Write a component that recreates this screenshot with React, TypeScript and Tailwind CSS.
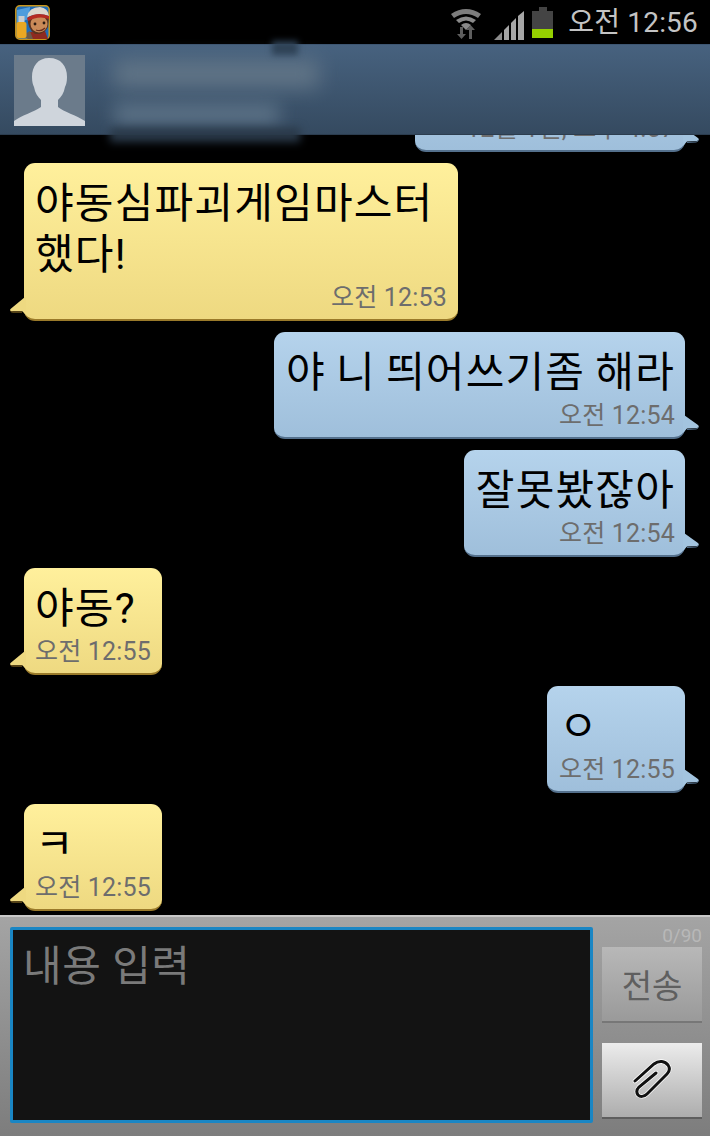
const KR = "font-['Roboto','Noto_Sans_CJK_KR',sans-serif]";

function Tail({ side, color }: { side: "left" | "right"; color: string }) {
  return side === "left" ? (
    <svg className="absolute left-[-15px] bottom-[2px]" width="17" height="20" viewBox="0 0 17 20">
      <path d="M16 0 L1.5 12 Q0 14 3 14 L13 14 L17 18 L17 0 Z" fill={color} />
      <path d="M1.5 14 Q2 15 4 15 L13 15" stroke="#a8842e" strokeWidth="1" fill="none" />
    </svg>
  ) : (
    <svg className="absolute right-[-15px] bottom-[2px]" width="17" height="20" viewBox="0 0 17 20">
      <path d="M1 0 L15 10 Q17 12 14 13 L4 13.5 L0 18 L0 0 Z" fill={color} />
      <path d="M15.5 12.5 Q15 13.6 13 14 L4 14.5" stroke="#54708c" strokeWidth="1" fill="none" />
    </svg>
  );
}

function Bubble({ side, lines, time, width }: { side: "left" | "right"; lines: string[]; time: string; width?: string }) {
  const left = side === "left";
  return (
    <div className={`flex shrink-0 ${left ? "justify-start pl-[24px]" : "justify-end pr-[25px]"}`}>
      <div
        className={`relative rounded-[11px] pt-[15px] pb-[6px] ${width ?? ""} ${
          left
            ? "pl-[11px] pr-[11px] bg-gradient-to-b from-[#fff09c] to-[#eed981] border-b-2 border-[#9a7a2a]"
            : "pl-[12px] pr-[10px] bg-gradient-to-b from-[#b5d3ec] to-[#9fbfdb] border-b-2 border-[#54708c]"
        }`}
      >
        <div className="text-[42px] leading-[51px] text-black whitespace-nowrap tracking-[1.2px] [word-spacing:-1.5px]">
          {lines.map((l) => (
            <div key={l}>{l}</div>
          ))}
        </div>
        <div className="text-right text-[25px] leading-[30px] text-[#6d6d6d] whitespace-nowrap mt-[3px] tracking-[0.2px]">{time}</div>
        <Tail side={side} color={left ? "#eed981" : "#a3c4df"} />
      </div>
    </div>
  );
}

function GameIcon() {
  return (
    <svg width="35" height="35" viewBox="0 0 35 35">
      <rect x="0.8" y="0.8" width="33.4" height="33.4" rx="4" fill="#1d6cb8" stroke="#c9961c" strokeWidth="1.5" />
      <path d="M2 5 L15 2 L14 14 L2 18 Z" fill="#4f9ddc" />
      <path d="M15 34 L14 27 L30 26 L33 34 Z" fill="#8e2a20" />
      <path d="M13 34 L8 30 L15 26 L18 34 Z" fill="#6b5a4a" />
      <path d="M13 12 Q12 24 20 29 Q29 30 33 22 L34 11 Z" fill="#5a3320" />
      <circle cx="24" cy="19" r="8.5" fill="#c98a58" />
      <path d="M12 12 Q14 2 25 2 Q33 3 34 11 Q24 7 12 12 Z" fill="#dcd6cc" />
      <path d="M12 13 Q22 6 34 11 L34 14 Q24 10 13 16 Z" fill="#b52a22" />
      <circle cx="20" cy="19" r="1.4" fill="#2a1a12" />
      <circle cx="29" cy="18" r="1.4" fill="#2a1a12" />
      <path d="M21 25 Q26 27 30 23" stroke="#6c2c1c" strokeWidth="1.2" fill="none" />
      <rect x="1.5" y="17" width="10" height="16" rx="2" fill="#e9a823" />
      <rect x="3.5" y="11" width="6" height="6" fill="#c9cdd0" />
    </svg>
  );
}

function StatusBar() {
  return (
    <div className="h-[44px] bg-black flex items-center pl-[15px] pr-[12px]">
      <GameIcon />
      <div className="flex-1" />
      <svg width="30" height="32" viewBox="0 0 30 32" className="mr-[13px] mt-[2px]">
        <path d="M0 7 Q15 -3 30 7 L27 11 Q15 3 3 11 Z" fill="#7d7d7d" />
        <path d="M5 13 Q15 6 25 13 L22 16 Q15 11 8 16 Z" fill="#8a8a8a" />
        <path d="M10 18 Q15 14 20 18 L15 23 Z" fill="#8a8a8a" />
        <path d="M9 20 h3 v7 h3 l-4.5 5 l-4.5 -5 h3 Z" fill="#5e5e5e" />
        <path d="M18 32 h3 v-9 h3 l-4.5 -5 l-4.5 5 h3 Z" fill="#5e5e5e" />
      </svg>
      <svg width="30" height="29" viewBox="0 0 30 29" className="mr-[8px] mt-[7px]">
        <path d="M0 29 L8 21 V29 Z" fill="#8c8c8c" />
        <path d="M10 19 L15 14 V29 H10 Z" fill="#a6a6a6" />
        <path d="M17 12 L22 7 V29 H17 Z" fill="#a6a6a6" />
        <path d="M24 5 L30 0 V29 H24 Z" fill="#a6a6a6" />
      </svg>
      <div className="mr-[15px] flex flex-col items-center">
        <div className="w-[8px] h-[4px] bg-[#444]" />
        <div className="w-[21px] h-[27px] flex flex-col bg-[#444]">
          <div className="flex-1" />
          <div className="h-[9px] bg-[#95d000]" />
        </div>
      </div>
      <span className="text-[28px] leading-none text-[#c4c4c4] whitespace-nowrap tracking-[0.2px] mt-[2px]">오전 12:56</span>
    </div>
  );
}

function Header() {
  return (
    <div className="relative z-10 h-[91px] shrink-0 bg-gradient-to-b from-[#47627f] to-[#354a60] border-t border-[#3d5672] border-b border-b-[#2c3d4f] flex items-center pl-[14px] pt-[2px]">
      <svg width="71" height="71" viewBox="0 0 71 71" className="shrink-0">
        <rect width="71" height="71" fill="#6b7b8b" />
        <path
          d="M35 3 C24 3 18 11 18 22 C18 27 19 30 20 32 C21 38 24 42 27 45 L27 52 C20 57 8 60 0 66 L0 71 L71 71 L71 66 C62 60 50 57 44 52 L44 45 C47 42 50 38 51 32 C52 30 53 27 53 22 C53 11 47 3 35 3 Z"
          fill="#cfd5dc"
        />
      </svg>
      <div className="absolute left-[114px] top-[15px] w-[205px] h-[28px] bg-[#6b7d8c] blur-[10px] opacity-75" />
      <div className="absolute left-[114px] top-[58px] w-[165px] h-[22px] bg-[#647a8e] blur-[9px] opacity-80" />
      <div className="absolute left-[110px] top-[83px] w-[190px] h-[14px] bg-[#2a3949] blur-[4px]" />
      <div className="absolute left-[272px] top-[-4px] w-[26px] h-[14px] bg-[#2f4256] blur-[3px]" />
    </div>
  );
}

const CLIP = "M4 22 L23 5 C28 1 34 2 37 6 C39 9 39 12 36 15 L16 35 C13 38 9 38 7 36 C5 33 6 30 8 28 L25 14";

function Composer() {
  return (
    <div className="h-[221px] shrink-0 bg-gradient-to-b from-[#a4a4a4] to-[#7d7d7d] border-t-2 border-[#c8c8c8] flex pl-[10px] pr-[8px] pt-[10px] pb-[13px]">
      <div className="flex-1 bg-[#131313] border-[3px] border-[#1a86c4] rounded-[2px] pl-[10px] pt-[9px]">
        <span className="text-[42px] leading-[56px] text-[#7a7a7a] tracking-[0.5px]">내용 입력</span>
      </div>
      <div className="w-[100px] ml-[9px] flex flex-col">
        <div className="h-[20px] -mt-[1px] text-right text-[19px] leading-[20px] text-[#b8b8b8]">0/90</div>
        <div className="mt-[1px] h-[76px] bg-gradient-to-b from-[#b8b8b8] to-[#9a9a9a] border-b-2 border-[#777777] pt-[6px] flex items-center justify-center text-[33px] text-[#5f5f5f]">
          전송
        </div>
        <div className="mt-[20px] h-[76px] bg-gradient-to-b from-[#ececec] to-[#adadad] border-b-2 border-[#5e5e5e] flex items-center justify-center">
          <svg width="42" height="42" viewBox="0 0 42 42" fill="none">
            <path d={CLIP} stroke="#ffffff" strokeWidth="4.4" strokeLinecap="round" />
            <path d={CLIP} stroke="#111111" strokeWidth="3" strokeLinecap="round" />
          </svg>
        </div>
      </div>
    </div>
  );
}

export default function App() {
  return (
    <div className={`w-[710px] h-[1136px] bg-black flex flex-col overflow-hidden ${KR}`}>
      <StatusBar />
      <Header />
      <div className="flex-1 min-h-0 overflow-hidden flex flex-col justify-end gap-[11px] pb-[4px]">
        <Bubble side="right" lines={["ㅋㅋㅋㅋㅋ"]} time="12월 1일, 오후 4:57" width="w-[270px]" />
        <Bubble side="left" lines={["야동심파괴게임마스터", "했다!"]} time="오전 12:53" width="w-[434px]" />
        <Bubble side="right" lines={["야 니 띄어쓰기좀 해라"]} time="오전 12:54" />
        <Bubble side="right" lines={["잘못봤잖아"]} time="오전 12:54" />
        <Bubble side="left" lines={["야동?"]} time="오전 12:55" />
        <Bubble side="right" lines={["ㅇ"]} time="오전 12:55" />
        <Bubble side="left" lines={["ㅋ"]} time="오전 12:55" />
      </div>
      <Composer />
    </div>
  );
}
